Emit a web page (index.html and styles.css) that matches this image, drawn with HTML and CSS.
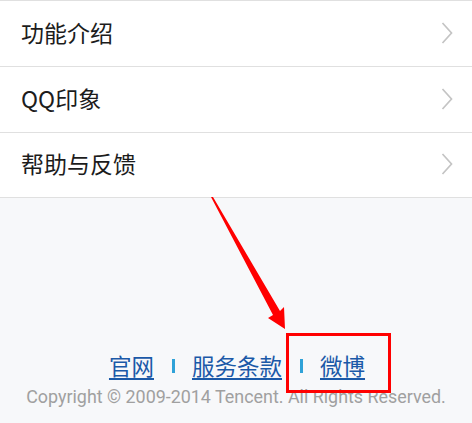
FILE: index.html
```html
<!DOCTYPE html>
<html lang="zh-CN">
<head>
    <meta charset="UTF-8">
    <meta name="viewport" content="width=device-width, initial-scale=1.0">
    <title>关于QQ</title>
    <link rel="stylesheet" href="styles.css">
</head>
<body>
    <ul class="menu">
        <li>功能介绍 <svg class="chevron" width="12" height="22" viewBox="0 0 12 22"><polyline points="1.5,1 10.5,11 1.5,21" fill="none" stroke="#c4c4c4" stroke-width="1.7"/></svg></li>
        <li>QQ印象 <svg class="chevron" width="12" height="22" viewBox="0 0 12 22"><polyline points="1.5,1 10.5,11 1.5,21" fill="none" stroke="#c4c4c4" stroke-width="1.7"/></svg></li>
        <li>帮助与反馈 <svg class="chevron" width="12" height="22" viewBox="0 0 12 22"><polyline points="1.5,1 10.5,11 1.5,21" fill="none" stroke="#c4c4c4" stroke-width="1.7"/></svg></li>
    </ul>

    <div class="footer">
        <div class="links">
            <a href="#">官网</a>
            <span class="sep"></span>
            <a href="#">服务条款</a>
            <span class="sep"></span>
            <a href="#">微博</a>
        </div>
        <p class="copyright">Copyright © 2009-2014 Tencent. All Rights Reserved.</p>
    </div>

    <svg class="markup" width="472" height="423" viewBox="0 0 472 423">
        <polygon points="211,197 213,197 280,311 284,307 285,329 268,318 273,315" fill="#ff0000"/>
        <rect x="287.5" y="334.5" width="102" height="57" fill="none" stroke="#ff0000" stroke-width="3"/>
    </svg>
</body>
</html>
```

FILE: styles.css
```css
* { box-sizing: border-box; margin: 0; padding: 0; }
body { display: flex; flex-direction: column; height: 100vh; background: #f7f8fa; font-family: "Noto Sans CJK SC", sans-serif; position: relative; }

.menu { list-style: none; background: #fff; border-top: 1px solid #e0e0e0; }
.menu li { display: flex; justify-content: space-between; align-items: center; height: 66px; padding: 0 19px 4px 21px; border-bottom: 1px solid #e0e0e0; font-size: 23px; color: #1c1c1c; }
.menu li:last-child { height: 65px; }
.chevron { margin-top: 2px; }

.footer { flex: 1; display: flex; flex-direction: column; justify-content: flex-end; align-items: center; padding-bottom: 16px; }
.links { display: flex; align-items: center; font-size: 22.5px; line-height: 26px; margin-bottom: 9px; margin-left: 2px; }
.links a { color: #1b59a8; text-decoration: underline; text-underline-offset: 3px; text-decoration-thickness: 1.5px; }
.sep { width: 3px; height: 14px; background: #2fa2d8; margin: 2px 17px 0 18px; }
.copyright { font-family: "Roboto", sans-serif; font-size: 17.9px; color: #a0a0a0; line-height: 20px; }

.markup { position: absolute; top: 0; left: 0; pointer-events: none; }
```
